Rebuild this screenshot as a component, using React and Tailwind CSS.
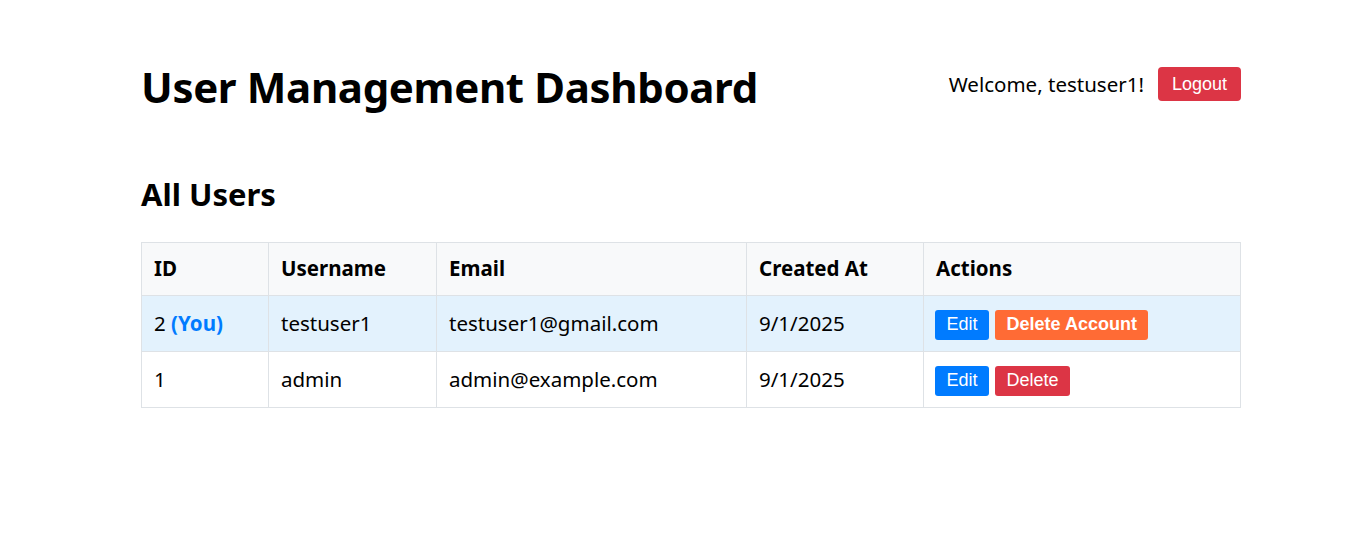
import React from 'react';

const users = [
  { id: 2, username: 'testuser1', email: 'testuser1@gmail.com', created: '9/1/2025', me: true },
  { id: 1, username: 'admin', email: 'admin@example.com', created: '9/1/2025', me: false },
];

const cell = 'border border-[#dee2e6] px-3 text-left';

export default function App() {
  return (
    <div className="min-h-screen bg-white text-black font-['Noto_Sans',sans-serif]">
      <div className="ml-[141px] w-[1100px] pt-[62px]">
        <header className="flex items-center justify-between">
          <h1 className="text-[42px] font-bold leading-[1.2] tracking-[-0.35px]">User Management Dashboard</h1>
          <div className="mb-[6px] flex items-center gap-[14px]">
            <span className="text-[20.5px]">Welcome, testuser1!</span>
            <button className="h-[34px] rounded-[4px] bg-[#dc3545] px-[14px] font-['Liberation_Sans',Arial,sans-serif] text-[18px] text-white">
              Logout
            </button>
          </div>
        </header>

        <h2 className="mt-[64px] text-[31px] font-bold leading-[1.2]">All Users</h2>

        <table className="mt-[28px] w-full border-collapse text-[20.5px]">
          <thead>
            <tr className="h-[53px] bg-[#f8f9fa]">
              <th className={`${cell} w-[127px] font-bold`}>ID</th>
              <th className={`${cell} w-[168px] font-bold`}>Username</th>
              <th className={`${cell} w-[310px] font-bold`}>Email</th>
              <th className={`${cell} w-[177px] font-bold`}>Created At</th>
              <th className={`${cell} font-bold`}>Actions</th>
            </tr>
          </thead>
          <tbody>
            {users.map((u) => (
              <tr key={u.id} className={`h-[56px] ${u.me ? 'bg-[#e3f2fd]' : 'bg-white'}`}>
                <td className={cell}>
                  {u.id}
                  {u.me && <span className="font-bold text-[#007bff]"> (You)</span>}
                </td>
                <td className={cell}>{u.username}</td>
                <td className={cell}>{u.email}</td>
                <td className={cell}>{u.created}</td>
                <td className={`${cell} pl-[11px]`}>
                  <div className="flex items-center gap-[6px] pt-[3px] font-['Liberation_Sans',Arial,sans-serif] text-[18px] text-white">
                    <button className="h-[30px] rounded-[3px] bg-[#007bff] px-[11.5px]">Edit</button>
                    {u.me ? (
                      <button className="h-[30px] rounded-[3px] bg-[#ff6b35] px-[11.5px] font-bold">Delete Account</button>
                    ) : (
                      <button className="h-[30px] rounded-[3px] bg-[#dc3545] px-[11.5px]">Delete</button>
                    )}
                  </div>
                </td>
              </tr>
            ))}
          </tbody>
        </table>
      </div>
    </div>
  );
}
